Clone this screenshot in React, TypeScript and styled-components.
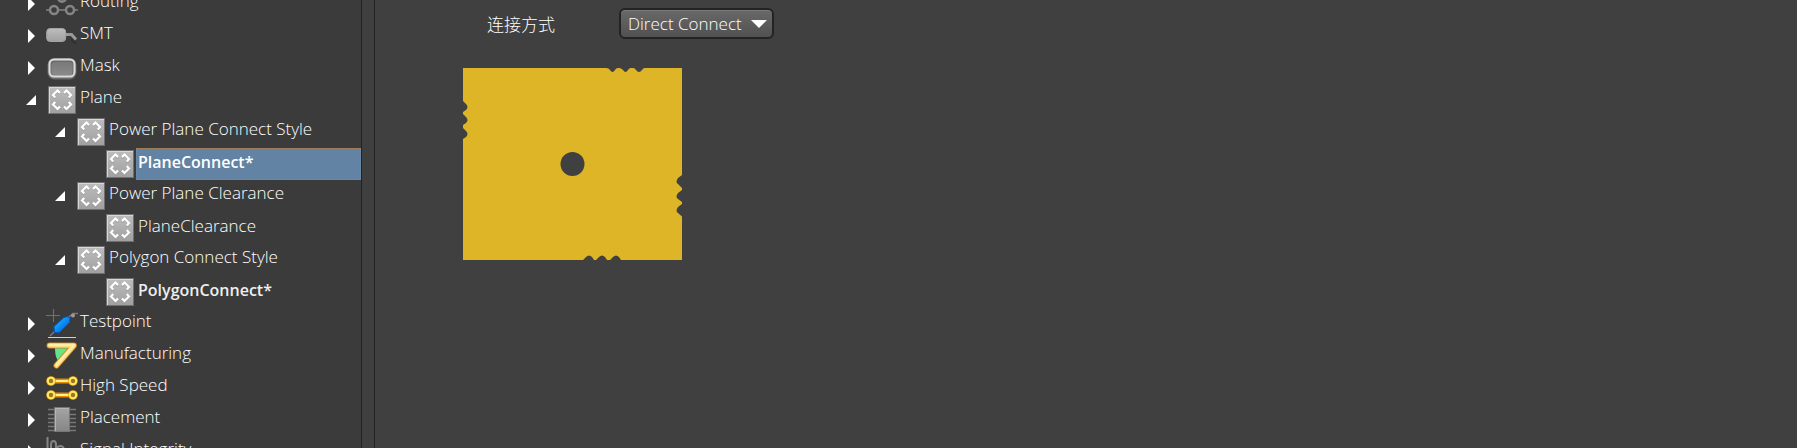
import React, { useState } from "react";
import styled, { createGlobalStyle, css } from "styled-components";

const GlobalStyle = createGlobalStyle`
  * { box-sizing: border-box; }
  body {
    margin: 0;
    background: #404040;
    color: #ffffff;
    font-family: "Open Sans", "Noto Sans CJK SC", sans-serif;
    font-size: 17px;
    font-weight: 300;
  }
`;

const Page = styled.div`
  display: flex;
  height: 100vh;
  overflow: hidden;
`;

const Sidebar = styled.nav`
  flex: 0 0 362px;
  overflow: hidden;
  background: #3b3b3b;
  border-right: 1px solid #222222;
`;

const Splitter = styled.div`
  flex: 0 0 13px;
  background: #3f3f3f;
  border-right: 1px solid #222222;
`;

const Tree = styled.ul`
  list-style: none;
  margin: -12px 0 0;
  padding: 0;
`;

const Row = styled.li<{ $depth: number }>`
  display: flex;
  height: 32px;
  padding-left: ${(p) => 22 + p.$depth * 29}px;
`;

const Toggle = styled.button`
  flex: 0 0 24px;
  padding: 0;
  border: 0;
  background: none;
  line-height: 0;
  text-align: left;
`;

const ToggleSpace = styled.span`
  flex: 0 0 24px;
`;

const Icon = styled.svg`
  flex: 0 0 32px;
  width: 32px;
  height: 32px;
`;

const Label = styled.a<{ $selected?: boolean; $bold?: boolean; $leaf?: boolean }>`
  flex: 1;
  padding: ${(p) => (p.$leaf ? 2 : 1)}px 0 0 2px;
  line-height: 24px;
  color: inherit;
  text-decoration: none;
  white-space: nowrap;
  ${(p) =>
    p.$bold &&
    css`
      color: #eeeeee;
      font-size: 16px;
      font-weight: 600;
    `}
  ${(p) =>
    p.$selected &&
    css`
      background: #6283a3;
      color: #ffffff;
      outline: 1px dotted #a5805f;
      outline-offset: -1px;
    `}
`;

const Main = styled.main`
  flex: 1;
  padding: 8px 0 0 88px;
`;

const Field = styled.div`
  display: flex;
  align-items: center;
  padding-left: 24px;
`;

const FieldLabel = styled.label`
  width: 132px;
  padding-top: 3px;
  line-height: 28px;
`;

const SelectBox = styled.span`
  display: grid;
  align-items: center;
`;

const Select = styled.select`
  grid-area: 1 / 1;
  appearance: none;
  width: 155px;
  height: 31px;
  padding: 0 0 1px 7px;
  border: 2px solid #232323;
  border-radius: 6px;
  background: linear-gradient(#696969, #515151);
  box-shadow: inset 0 1px 0 #7a7a7a;
  color: #ffffff;
  font: inherit;
`;

const SelectArrow = styled.svg`
  grid-area: 1 / 1;
  justify-self: end;
  width: 16px;
  height: 8px;
  margin-right: 7px;
  pointer-events: none;
`;

const Preview = styled.svg`
  display: block;
  width: 219px;
  height: 192px;
  margin-top: 29px;
`;

const chevrons =
  "M14 9L11.500 6.500L7 11L9.200 13.500M18 9L20.500 6.500L25 11L22.800 13.500M14 22.500L11.500 25L7 20.500L9.200 18M18 22.500L20.500 25L25 20.500L22.800 18";

function PadIcon() {
  return (
    <Icon viewBox="0 0 32 32">
      <rect x="2.500" y="2.500" width="27" height="27" fill="url(#pad)" stroke="#6f6f6f" />
      <path d="M3.500 29V3.500H29" fill="none" stroke="#d8d8d8" />
      <g fill="none" strokeWidth="2.200">
        <path d={chevrons} stroke="#777" opacity=".35" transform="translate(0 1)" />
        <path d={chevrons} stroke="#fff" />
      </g>
    </Icon>
  );
}

function RoutingIcon() {
  return (
    <Icon viewBox="0 0 32 32">
      <g fill="none" stroke="#858585" strokeWidth="2">
        <path d="M0 22h4M12 22h8M28 22h4" stroke="#707070" />
        <circle cx="8" cy="22" r="4" strokeWidth="2.500" />
        <circle cx="24" cy="22" r="4" strokeWidth="2.500" />
        <circle cx="16" cy="10" r="4" fill="#777" />
      </g>
    </Icon>
  );
}

function SmtIcon() {
  return (
    <Icon viewBox="0 0 32 32">
      <path d="M25 19l5 5" stroke="#303030" strokeWidth="2" />
      <path d="M19 14.500h6.500l4.500 5" fill="none" stroke="#999" strokeWidth="3" />
      <rect x="0.700" y="8.500" width="19" height="13" rx="3.500" fill="url(#pad)" stroke="#a5a5a5" />
    </Icon>
  );
}

function MaskIcon() {
  return (
    <Icon viewBox="0 0 32 32">
      <rect x="3.500" y="8" width="25" height="17.500" rx="5" fill="url(#mask)" stroke="#6b6b6b" strokeWidth="4" />
      <rect x="3.500" y="7.500" width="25" height="17" rx="4.500" fill="none" stroke="#dcdcdc" strokeWidth="2" />
    </Icon>
  );
}

function TestpointIcon() {
  return (
    <Icon viewBox="0 0 32 32">
      <path d="M4 28l5-5M23 9l4-3.500h5" fill="none" stroke="#777" strokeWidth="1.500" />
      <circle cx="27" cy="7.500" r="2" fill="#999" />
      <path d="M8.500 24.500l-.5-6L18 9.500l4-1 2 2-.5 4-10 10z" fill="url(#probe)" stroke="#0754c4" />
      <path d="M0 7.500h14M7.500 1v13" stroke="#00b82e" />
      <path d="M2 29.500h28" stroke="#cfcfcf" />
    </Icon>
  );
}

function ManufacturingIcon() {
  return (
    <Icon viewBox="0 0 32 32">
      <path d="M9 8h18L14 24C10 19 9 14 9 8z" fill="#62e58a" />
      <g fill="none" strokeLinecap="round" strokeLinejoin="round">
        <path d="M3.500 5.500H28L10.500 25.500" stroke="#bd831e" strokeWidth="6" />
        <path d="M3.500 5.500H28L10.500 25.500" stroke="#ffd66e" strokeWidth="4.500" />
        <path d="M3.500 5H28L10.500 25" stroke="#ffedb0" strokeWidth="2.500" />
      </g>
    </Icon>
  );
}

function HighSpeedIcon() {
  return (
    <Icon viewBox="0 0 32 32">
      {[9, 23].map((y) => (
        <g key={y}>
          <path d={`M8 ${y}h16`} stroke="#e48c00" strokeWidth="5" />
          <path d={`M8 ${y}h16`} stroke="#fff08c" strokeWidth="2" />
          {[5, 27].map((x) => (
            <g key={x}>
              <circle cx={x} cy={y} r="4.800" fill="#e59a08" />
              <circle cx={x} cy={y} r="3.200" fill="#9b7919" stroke="#ffe768" strokeWidth="2" />
            </g>
          ))}
        </g>
      ))}
    </Icon>
  );
}

function PlacementIcon() {
  return (
    <Icon viewBox="0 0 32 32">
      <path d="M2 5.500h28M2 10.500h28M2 14.500h28M2 18.500h28M2 22.500h28M2 26.500h28" stroke="#777" strokeWidth="1.500" />
      <rect x="8.500" y="3.500" width="15" height="24" fill="url(#chip)" stroke="#777" />
      <path d="M9.500 27V4.500H23" fill="none" stroke="#b5b5b5" />
    </Icon>
  );
}

function SignalIcon() {
  return (
    <Icon viewBox="0 0 32 32">
      <path
        d="M1.500 1v28h29M5 29V9q0-4 2.500-4T10 9v11M10 14q1-4 4.500-4t4 6"
        fill="none"
        stroke="#858585"
        strokeWidth="2"
      />
    </Icon>
  );
}

type Item = {
  text: string;
  depth: number;
  icon: () => React.ReactElement;
  open?: boolean;
  leaf?: boolean;
  bold?: boolean;
};

const items: Item[] = [
  { text: "Routing", depth: 0, icon: RoutingIcon },
  { text: "SMT", depth: 0, icon: SmtIcon },
  { text: "Mask", depth: 0, icon: MaskIcon },
  { text: "Plane", depth: 0, icon: PadIcon, open: true },
  { text: "Power Plane Connect Style", depth: 1, icon: PadIcon, open: true },
  { text: "PlaneConnect*", depth: 2, icon: PadIcon, leaf: true, bold: true },
  { text: "Power Plane Clearance", depth: 1, icon: PadIcon, open: true },
  { text: "PlaneClearance", depth: 2, icon: PadIcon, leaf: true },
  { text: "Polygon Connect Style", depth: 1, icon: PadIcon, open: true },
  { text: "PolygonConnect*", depth: 2, icon: PadIcon, leaf: true, bold: true },
  { text: "Testpoint", depth: 0, icon: TestpointIcon },
  { text: "Manufacturing", depth: 0, icon: ManufacturingIcon },
  { text: "High Speed", depth: 0, icon: HighSpeedIcon },
  { text: "Placement", depth: 0, icon: PlacementIcon },
  { text: "Signal Integrity", depth: 0, icon: SignalIcon },
];

function Gradients() {
  return (
    <defs>
      <linearGradient id="pad" x2="0" y2="1">
        <stop stopColor="#bdbdbd" />
        <stop offset="1" stopColor="#a0a0a0" />
      </linearGradient>
      <linearGradient id="mask" x2="0" y2="1">
        <stop stopColor="#777" />
        <stop offset="1" stopColor="#8d8d8d" />
      </linearGradient>
      <linearGradient id="chip" x2="0" y2="1">
        <stop stopColor="#a5a5a5" />
        <stop offset="1" stopColor="#858585" />
      </linearGradient>
      <linearGradient id="probe" x2="1" y2="1">
        <stop offset=".2" stopColor="#19b4ff" />
        <stop offset=".8" stopColor="#0064e0" />
      </linearGradient>
    </defs>
  );
}

export default function App() {
  const [selected, setSelected] = useState("PlaneConnect*");
  return (
    <Page>
      <GlobalStyle />
      <Sidebar>
        <Tree>
          {items.map(({ text, depth, icon: Glyph, open, leaf, bold }) => (
            <Row key={text} $depth={depth}>
              {leaf ? (
                <ToggleSpace />
              ) : (
                <Toggle aria-label={text} aria-expanded={!!open}>
                  <svg width="24" height="32" viewBox="0 0 24 32" fill="#fff">
                    <path d={open ? "M4 21L14 11V21z" : "M6 9L13 16L6 23z"} />
                  </svg>
                </Toggle>
              )}
              <Glyph />
              <Label
                href="#"
                $selected={selected === text}
                $bold={bold}
                $leaf={leaf}
                onClick={(e) => {
                  e.preventDefault();
                  setSelected(text);
                }}
              >
                {text}
              </Label>
            </Row>
          ))}
        </Tree>
      </Sidebar>
      <Splitter />
      <Main>
        <Field>
          <FieldLabel htmlFor="connect-style">连接方式</FieldLabel>
          <SelectBox>
            <Select id="connect-style" defaultValue="Direct Connect">
              <option>Direct Connect</option>
              <option>Relief Connect</option>
              <option>No Connect</option>
            </Select>
            <SelectArrow viewBox="0 0 16 8">
              <path d="M0 0H16L8 8z" fill="#fff" />
            </SelectArrow>
          </SelectBox>
        </Field>
        <Preview viewBox="0 0 219 192">
          <Gradients />
          <path
            fill="#dfb528"
            d="M0 0H143q3 0 4 2q2.500 4 5 0q1-2 3-2h1q2 0 4 2q2.500 4 5 0q1-2 3-2h2q2 0 3 2q3 4 6 0q1-2 3-2H219V107l-4 3q-3 4 0 6l4 4v2l-4 3q-3 4 0 6l4 3v2l-4 3q-3 4 0 6l4 3.500V192H158l-2-3q-3-3-6 0l-3 3h-3l-2-3q-3-3-6 0l-3 3h-2l-2-3q-3-3-6 0l-3 3H0V71l3-2q3-3 0-6l-3-3v-3l3-2q3-3 0-6l-3-3v-2l3-2q3-3 0-6l-3-3z"
          />
          <circle cx="109.500" cy="96" r="12" fill="#404040" />
        </Preview>
      </Main>
    </Page>
  );
}
